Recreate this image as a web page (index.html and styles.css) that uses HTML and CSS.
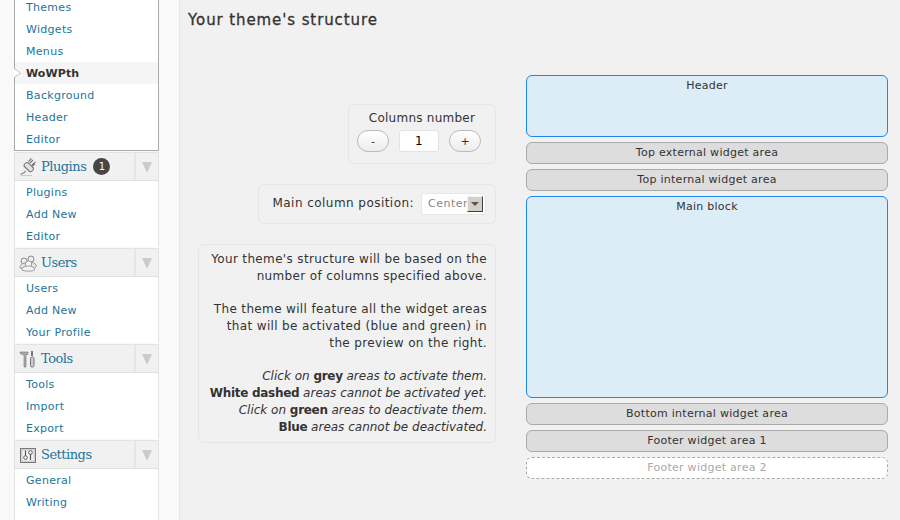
FILE: index.html
```html
<!DOCTYPE html>
<html lang="en">
<head>
<meta charset="utf-8">
<title>WoWPth</title>
<link rel="stylesheet" href="styles.css">
</head>
<body>
<div class="page">
  <aside class="sidebar">
    <nav class="menu">
      <ul class="sub sub-open">
        <li><a>Themes</a></li>
        <li><a>Widgets</a></li>
        <li><a>Menus</a></li>
        <li class="current"><span class="pointer"><span class="pointer-inner"></span></span><a>WoWPth</a></li>
        <li><a>Background</a></li>
        <li><a>Header</a></li>
        <li><a>Editor</a></li>
      </ul>
      <section class="group">
        <div class="head">
          <span class="label">
            <svg class="icon" viewBox="0 0 18 18" width="18" height="18"><path d="M5 8l5.500 5.500c2 .5 4-1 4-3.500L9 4.500C7 4.500 5 6 5 8z" fill="#e4e4e4" stroke="#777" stroke-width="1.100"/><path d="M1.500 16.500c1.500-.5 4-1.500 5-3.500M9.500 3.500l3-3M13 7l3.500-3M11 5l3-3M12.500 8.500L16 6" fill="none" stroke="#777" stroke-width="1.100"/><path d="M2 17.500h11" stroke="#ccc"/></svg>
            <span class="head-text">Plugins</span>
            <span class="badge">1</span>
          </span>
          <span class="toggle"><span class="arrow"></span></span>
        </div>
        <ul class="sub">
          <li><a>Plugins</a></li>
          <li><a>Add New</a></li>
          <li><a>Editor</a></li>
        </ul>
      </section>
      <section class="group">
        <div class="head">
          <span class="label">
            <svg class="icon" viewBox="0 0 18 18" width="18" height="18"><circle cx="5" cy="7" r="3" fill="#eee" stroke="#888"/><circle cx="12" cy="5" r="3" fill="#eee" stroke="#888"/><path d="M1 14c0-4 3-5 6-5 1-1 8-2 10 2 1 2-1 3-3 3l-1 0z" fill="#e8e8e8" stroke="#999"/><circle cx="9.500" cy="10" r="3.200" fill="#f6f6f6" stroke="#999"/><path d="M3 16c0-3 3-4 6.500-4s6 1 6 4c-2 1.500-10 1.500-12.500 0z" fill="#f4f4f4" stroke="#999"/></svg>
            <span class="head-text">Users</span>
          </span>
          <span class="toggle"><span class="arrow"></span></span>
        </div>
        <ul class="sub">
          <li><a>Users</a></li>
          <li><a>Add New</a></li>
          <li><a>Your Profile</a></li>
        </ul>
      </section>
      <section class="group">
        <div class="head">
          <span class="label">
            <svg class="icon" viewBox="0 0 18 18" width="18" height="18"><path d="M1 2h8v2.500H7V17H5V4.500H3.500C2.500 4.500 1.500 4 1 3z" fill="#aaa" stroke="#777" stroke-width=".6"/><path d="M13 1v5" stroke="#777" stroke-width="2"/><rect x="11.500" y="7" width="3.500" height="10" rx="1.500" fill="#ccc" stroke="#777"/></svg>
            <span class="head-text">Tools</span>
          </span>
          <span class="toggle"><span class="arrow"></span></span>
        </div>
        <ul class="sub">
          <li><a>Tools</a></li>
          <li><a>Import</a></li>
          <li><a>Export</a></li>
        </ul>
      </section>
      <section class="group">
        <div class="head">
          <span class="label">
            <svg class="icon" viewBox="0 0 18 18" width="18" height="18"><rect x="1.500" y="2.500" width="15" height="14" fill="#ddd" stroke="#777"/><rect x="3" y="4" width="12" height="11" fill="#f4f4f4" stroke="#aaa" stroke-width=".5"/><path d="M6.500 4.500v5M11.500 8v6" stroke="#555" stroke-width="1.200"/><circle cx="6.500" cy="11.500" r="1.800" fill="#fff" stroke="#555"/><circle cx="11.500" cy="6.500" r="1.800" fill="#fff" stroke="#555"/></svg>
            <span class="head-text">Settings</span>
          </span>
          <span class="toggle"><span class="arrow"></span></span>
        </div>
        <ul class="sub">
          <li><a>General</a></li>
          <li><a>Writing</a></li>
          <li><a>Reading</a></li>
        </ul>
      </section>
    </nav>
  </aside>
  <main class="main">
    <h2 class="title">Your theme's structure</h2>
    <div class="columns">
      <div class="controls">
        <div class="panel panel-columns">
          <div class="panel-label">Columns number</div>
          <div class="stepper">
            <button class="pill" type="button">-</button>
            <span class="count">1</span>
            <button class="pill" type="button">+</button>
          </div>
        </div>
        <div class="panel panel-position">
          <span class="position-label">Main column position:</span>
          <span class="select">Center<span class="select-btn"><span class="select-arrow"></span></span></span>
        </div>
        <div class="panel panel-info">
          <p>Your theme's structure will be based on the<br>number of columns specified above.</p>
          <p>The theme will feature all the widget areas<br>that will be activated (blue and green) in<br>the preview on the right.</p>
          <p class="legend"><em>Click on <b>grey</b> areas to activate them.</em><br><em><b>White dashed</b> areas cannot be activated yet.</em><br><em>Click on <b>green</b> areas to deactivate them.</em><br><em><b>Blue</b> areas cannot be deactivated.</em></p>
        </div>
      </div>
      <div class="preview">
        <div class="area blue area-header">Header</div>
        <div class="area grey">Top external widget area</div>
        <div class="area grey">Top internal widget area</div>
        <div class="area blue area-main">Main block</div>
        <div class="area grey">Bottom internal widget area</div>
        <div class="area grey">Footer widget area 1</div>
        <div class="area dashed">Footer widget area 2</div>
      </div>
    </div>
  </main>
</div>
</body>
</html>
```
FILE: styles.css
```css
* { box-sizing: border-box; }
html, body { margin: 0; padding: 0; height: 520px; overflow: hidden; }
body { font-family: "DejaVu Sans", Verdana, sans-serif; font-size: 11px; color: #333; background: #f1f1f1; }
ul { list-style: none; margin: 0; padding: 0; }
.page { display: flex; height: 520px; overflow: hidden; }
.sidebar { width: 180px; flex: none; background: #f9f9f9; border-right: 1px solid #e6e6e6; padding-left: 14px; }
.menu { width: 145px; margin-top: -4px; }
.sub { background: #fff; border-left: 1px solid #e3e3e3; border-right: 1px solid #e3e3e3; }
.sub-open { border: 1px solid #aaa; border-top: 0; height: 155px; margin-bottom: 1px; }
.sub li { position: relative; height: 22px; line-height: 24px; padding-left: 11px; color: #21759b; white-space: nowrap; }
.sub a { color: #21759b; letter-spacing: .3px; }
.sub li.current { background: #f5f5f5; }
.sub li.current a { color: #333; font-weight: bold; letter-spacing: .1px; }
.pointer { position: absolute; left: -1px; top: 6px; width: 0; height: 0; border-left: 7px solid #bbb; border-top: 5px solid transparent; border-bottom: 5px solid transparent; }
.pointer-inner { position: absolute; left: -7px; top: -4px; width: 0; height: 0; border-left: 6px solid #fff; border-top: 4px solid transparent; border-bottom: 4px solid transparent; }
.group { margin-bottom: 1px; }
.head { display: flex; height: 29px; background: #f1f1f1; border: 1px solid #e3e3e3; border-bottom-color: #e0e0e0; }
.label { flex: 1; display: flex; align-items: center; padding-left: 4px; border-right: 2px solid #e6e6e6; }
.icon { flex: none; display: block; margin-right: 4px; }
.head-text { font-family: "DejaVu Serif", Georgia, serif; font-size: 13px; letter-spacing: -.5px; color: #21759b; }
.badge { width: 17px; height: 17px; margin-left: 7px; border-radius: 50%; background: #464646; color: #fff; text-align: center; line-height: 17px; font-size: 10px; }
.toggle { width: 22px; flex: none; display: flex; align-items: center; justify-content: center; }
.arrow { width: 0; height: 0; margin-top: 2px; border-top: 11px solid #ccc; border-left: 5px solid transparent; border-right: 5px solid transparent; }
.main { flex: 1; min-width: 0; padding: 11px 12px 0 8px; background: #f1f1f1; }
.title { margin: 0; font-size: 15px; line-height: 18px; font-weight: normal; color: #333; letter-spacing: .9px; -webkit-text-stroke: .3px #333; }
.columns { display: flex; gap: 30px; padding-top: 46px; padding-left: 10px; }
.controls { width: 298px; flex: none; display: flex; flex-direction: column; align-items: flex-end; padding-top: 29px; }
.panel { border: 1px solid #e6e6e6; border-radius: 6px; background: #f1f1f1; letter-spacing: .35px; }
.panel-columns { width: 148px; height: 60px; padding-top: 6px; text-align: center; }
.panel-label { font-size: 12px; line-height: 15px; letter-spacing: .25px; }
.stepper { display: flex; justify-content: center; gap: 10px; margin: 4px 6px 0 0; }
.pill { width: 32px; height: 22px; padding: 0; border: 1px solid #bbb; border-radius: 11px; background: linear-gradient(#fff, #ececec); font: 11px "DejaVu Sans", sans-serif; color: #333; }
.count { width: 40px; height: 22px; background: #fff; border: 1px solid #e3e3e3; border-radius: 3px; text-align: center; line-height: 21px; font-size: 12px; color: #000; }
.panel-position { width: 238px; height: 40px; margin-top: 20px; display: flex; align-items: center; justify-content: flex-end; gap: 7px; padding: 0 9px 2px 0; }
.position-label { font-size: 12px; letter-spacing: .45px; }
.select { position: relative; width: 65px; height: 22px; margin-top: 2px; background: #fff; border: 1px solid #e6e6e6; border-radius: 3px; padding-left: 6px; line-height: 20px; color: #888; letter-spacing: .5px; }
.select-btn { position: absolute; right: 2px; top: 2px; width: 16px; height: 16px; display: flex; align-items: center; justify-content: center; background: #d4d0c8; border: 1px solid; border-color: #f4f2ee #404040 #404040 #f4f2ee; }
.select-arrow { width: 0; height: 0; border-top: 4px solid #555; border-left: 4px solid transparent; border-right: 4px solid transparent; }
.panel-info { width: 298px; height: 199px; margin-top: 20px; padding: 6px 8px 0 0; text-align: right; font-size: 12px; line-height: 16.750px; white-space: nowrap; }
.panel-info p { margin: 0 0 16.750px; }
.legend { letter-spacing: 0; }
.panel-info b { font-weight: bold; font-style: normal; letter-spacing: -.3px; }
.preview { width: 362px; flex: none; display: flex; flex-direction: column; gap: 5px; }
.area { height: 22px; border-radius: 6px; text-align: center; line-height: 19px; font-size: 11px; letter-spacing: .27px; border: 1px solid #aaa; color: #333; }
.grey { background: #ddd; }
.blue { background: #dcedf7; border-color: #1e88f0; line-height: 20px; }
.area-header { height: 62px; }
.area-main { height: 202px; }
.dashed { background: #fff; border: 1px dashed #aaa; color: #aaa; }
```
